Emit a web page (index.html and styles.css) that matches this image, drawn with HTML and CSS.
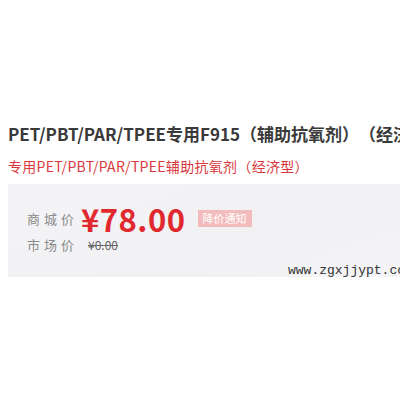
FILE: index.html
```html
<!DOCTYPE html>
<html lang="zh-CN">
<head>
    <meta charset="UTF-8">
    <meta name="viewport" content="width=device-width, initial-scale=1.0">
    <title>PET/PBT/PAR/TPEE专用F915</title>
    <link rel="stylesheet" href="styles.css">
</head>
<body>
    <div class="product">
        <h1 class="title">PET/PBT/PAR/TPEE专用F915（辅助抗氧剂）（经济型）</h1>
        <p class="subtitle">专用PET/PBT/PAR/TPEE辅助抗氧剂（经济型）</p>

        <div class="price-box">
            <div class="row row-main">
                <span class="label">商城价</span>
                <span class="price">¥78.00</span>
                <span class="notice">降价通知</span>
            </div>
            <div class="row">
                <span class="label">市场价</span>
                <span class="old-price">¥0.00</span>
            </div>
            <div class="watermark">www.zgxjjypt.com</div>
        </div>
    </div>
</body>
</html>
```

FILE: styles.css
```css
body {
    margin: 0;
    background: #fff;
    font-family: "Noto Sans CJK SC", "Noto Sans", sans-serif;
    overflow: hidden;
}
.product {
    padding: 121px 0 0 8px;
    white-space: nowrap;
    text-spacing-trim: space-all;
}
.title {
    margin: 0;
    font-size: 17px;
    font-weight: bold;
    line-height: 26px;
    color: #3a3a3a;
}
.subtitle {
    margin: 9px 0 0;
    font-size: 14px;
    line-height: 20px;
    letter-spacing: 0.3px;
    color: #d9393c;
}
.price-box {
    position: relative;
    margin-top: 8px;
    width: 420px;
    height: 93px;
    padding: 19px 0 0 19px;
    box-sizing: border-box;
    background: linear-gradient(160deg, #f4f4f6 0%, #f1f1f3 60%, #f5f5f7 100%);
}
.row {
    display: flex;
    align-items: center;
    height: 22px;
}
.row-main {
    height: 31px;
}
.label {
    width: 54px;
    font-size: 13px;
    line-height: 18px;
    letter-spacing: 4px;
    color: #8a8a8a;
}
.price {
    font-size: 31px;
    font-weight: bold;
    line-height: 30px;
    color: #e0282e;
    letter-spacing: 0.5px;
}
.notice {
    margin-left: 12px;
    padding: 0 5px;
    height: 17px;
    line-height: 17px;
    font-size: 11px;
    color: #fff;
    background: #f3bcbc;
}
.old-price {
    margin-left: 7px;
    font-size: 12px;
    line-height: 18px;
    color: #666;
    text-decoration: line-through;
}
.watermark {
    position: absolute;
    left: 280px;
    top: 80px;
    font-family: "Liberation Mono", monospace;
    font-size: 13px;
    line-height: 14px;
    color: #333;
}
```
